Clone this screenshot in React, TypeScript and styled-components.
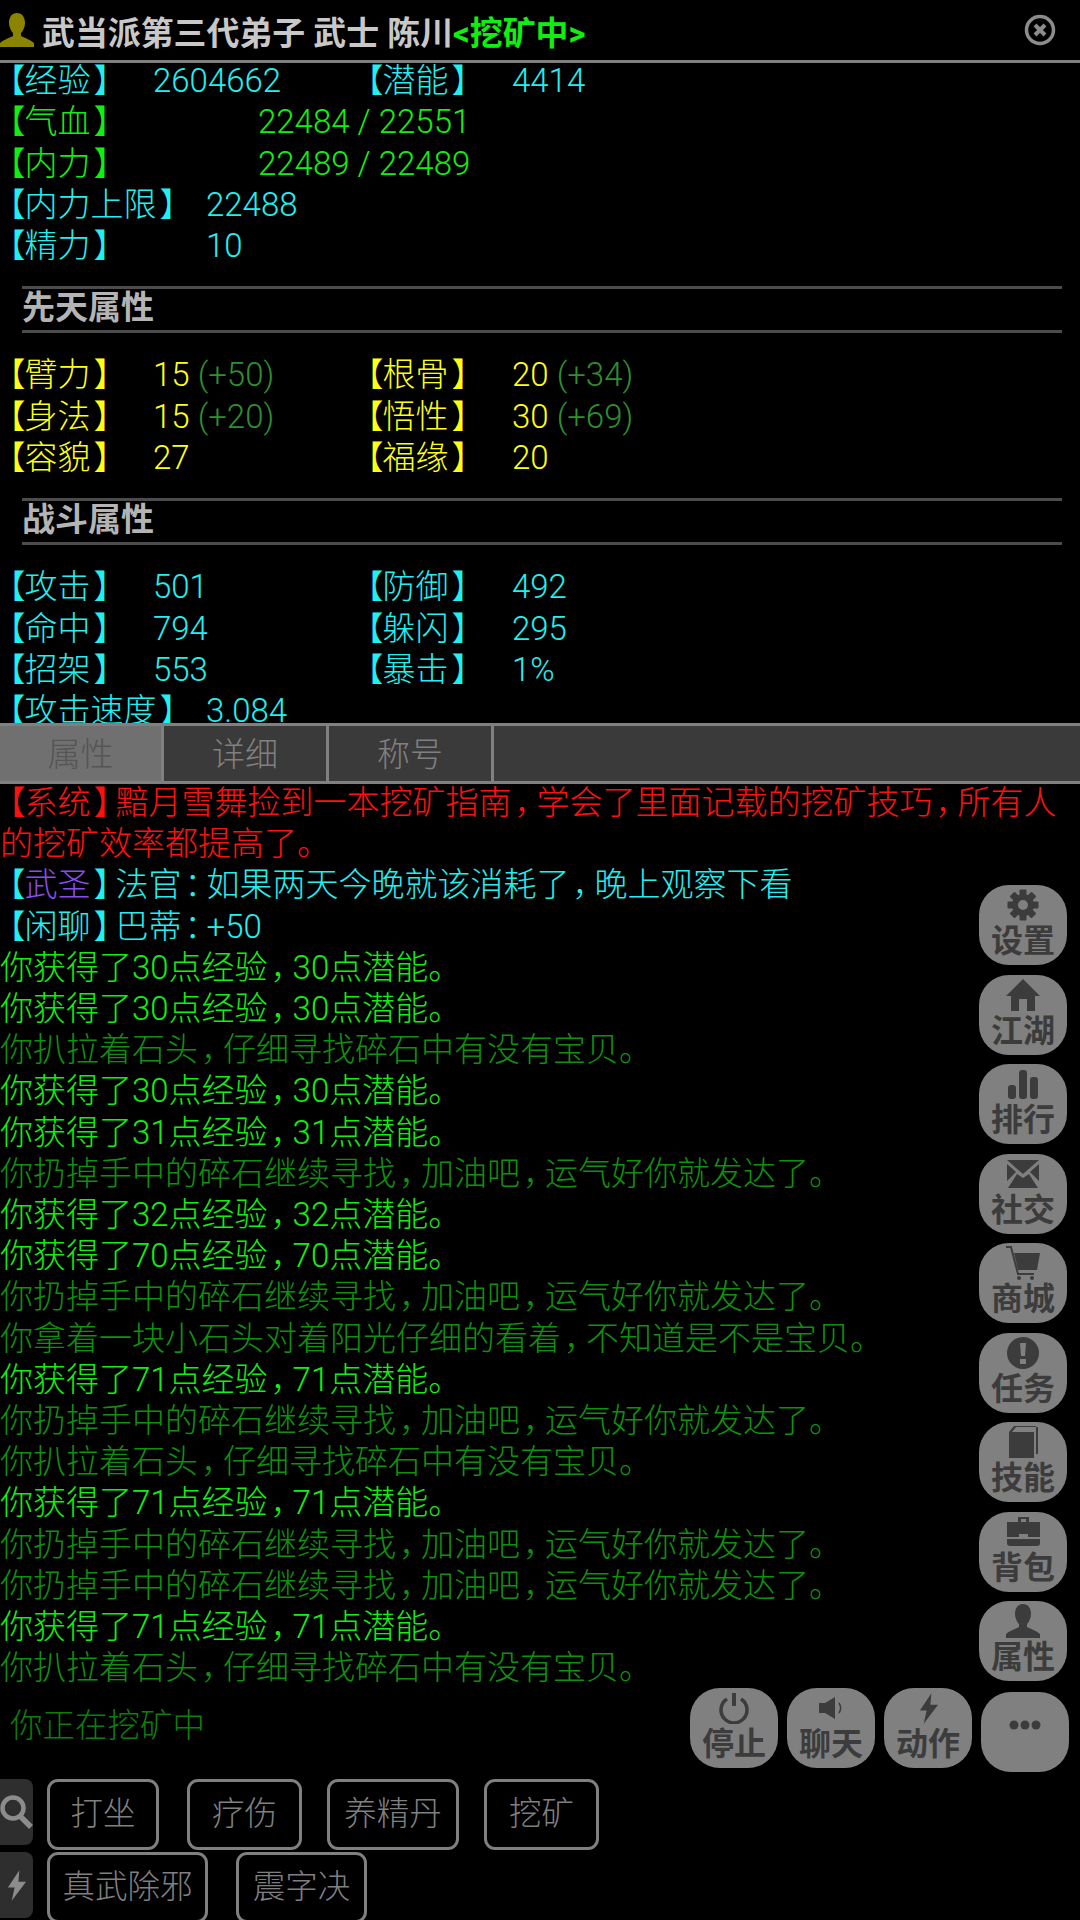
import React from 'react';
import styled, { createGlobalStyle } from 'styled-components';

const GlobalStyle = createGlobalStyle`
  html, body {
    margin: 0;
    padding: 0;
    background: #000;
  }
  body {
    font-family: Roboto, "Noto Sans CJK SC", sans-serif;
    font-size: 33px;
    font-weight: 300;
    line-height: 41.3px;
  }
`;

const CYAN = '#22f0f0';
const GREEN = '#10f010';
const DIM_GREEN = '#0e920e';
const YELLOW = '#ffff14';

// icons, drawn after the game's own icon font
const Gear = () => (
  <svg viewBox="0 0 32 32" width="32" height="32" fill="currentColor">
    {[0, 45, 90, 135, 180, 225, 270, 315].map((a) => (
      <rect key={a} x="12.5" y="0.5" width="7" height="8" rx="1" transform={`rotate(${a} 16 16)`} />
    ))}
    <path fillRule="evenodd" d="M16 5a11 11 0 1 0 0 22 11 11 0 0 0 0-22zm0 6a5 5 0 1 1 0 10 5 5 0 0 1 0-10z" />
  </svg>
);
const House = () => (
  <svg viewBox="0 0 34 32" width="34" height="32" fill="currentColor">
    <path d="M17 0 34 17h-5v15h-8V20h-8v12H5V17H0z" />
  </svg>
);
const Bars = () => (
  <svg viewBox="0 0 30 29" width="30" height="29" fill="currentColor">
    <rect x="0" y="15" width="8" height="14" rx="3" />
    <rect x="11" y="0" width="8" height="29" rx="3" />
    <rect x="22" y="7" width="8" height="22" rx="3" />
  </svg>
);
const Mail = () => (
  <svg viewBox="0 0 34 28" width="34" height="28" fill="currentColor">
    <path d="M1 0h32L17 14zM1 4l9 8-9 9zM33 4l-9 8 9 9zM11 14l6 4 6-4 9 14H2z" />
  </svg>
);
const Cart = () => (
  <svg viewBox="0 0 34 34" width="34" height="34" fill="currentColor">
    <path d="M8 7h26l-3 17H12z" />
    <path d="M0 1h5l7 27h16" fill="none" stroke="currentColor" strokeWidth="2" />
    <circle cx="13" cy="32" r="2" />
    <circle cx="26" cy="32" r="2" />
  </svg>
);
const Alert = () => (
  <svg viewBox="0 0 32 32" width="32" height="32" fill="currentColor">
    <path fillRule="evenodd" d="M16 0a16 16 0 1 0 0 32 16 16 0 0 0 0-32zM13 6h6l-1 13h-4zM13 22h6v5h-6z" />
  </svg>
);
const Book = () => (
  <svg viewBox="0 0 31 32" width="31" height="32" fill="currentColor">
    <path d="M1 6 6 0h22v1H8L4 6h22v26H1z" />
    <path d="M28 1h2v27h-2z" />
  </svg>
);
const Case = () => (
  <svg viewBox="0 0 33 29" width="33" height="29" fill="currentColor">
    <path fillRule="evenodd" d="M11 5V0h11v5h11v15H21v-3h-9v3H0V5zM14 2v3h5V2z" />
    <path d="M0 22h33v4a3 3 0 0 1-3 3H3a3 3 0 0 1-3-3z" />
  </svg>
);
const Person = ({ size = 34 }: { size?: number }) => (
  <svg viewBox="0 0 34 34" width={size} height={size} fill="currentColor">
    <path d="M17 0c5 0 8 4 8 10 0 4-2 8-4 10v3c4 2 10 4 13 7v4H0v-4c3-3 9-5 13-7v-3c-2-2-4-6-4-10 0-6 3-10 8-10z" />
  </svg>
);
const Power = () => (
  <svg viewBox="0 0 32 32" width="32" height="32" fill="none" stroke="currentColor" strokeWidth="3.5">
    <path d="M9 7a13 13 0 1 0 14 0" />
    <path d="M16 1v13" strokeWidth="4" />
  </svg>
);
const Speaker = () => (
  <svg viewBox="0 0 24 22" width="24" height="22" fill="currentColor">
    <path d="M0 6h6l10-6v22L6 16H0z" />
    <path d="M20 6c2 3 2 7 0 10" fill="none" stroke="currentColor" strokeWidth="1.5" />
  </svg>
);
const Bolt = ({ w = 21, h = 33 }: { w?: number; h?: number }) => (
  <svg viewBox="0 0 22 32" width={w} height={h} fill="currentColor">
    <path d="M14 0 2 18h7L6 32l15-20h-8z" />
  </svg>
);
const Dots = () => (
  <svg viewBox="0 0 32 10" width="32" height="10" fill="currentColor">
    <circle cx="5" cy="5" r="4.5" />
    <circle cx="16" cy="5" r="4.5" />
    <circle cx="27" cy="5" r="4.5" />
  </svg>
);
const Search = () => (
  <svg viewBox="0 0 33 34" width="33" height="34" fill="none" stroke="currentColor">
    <circle cx="13" cy="13" r="10.5" strokeWidth="4.5" />
    <path d="M20 21l11 11" strokeWidth="5.5" />
  </svg>
);
const CloseCircle = () => (
  <svg viewBox="0 0 32 32" width="32" height="32" fill="none" stroke="currentColor">
    <circle cx="16" cy="16" r="13.5" strokeWidth="3.5" />
    <path d="M11 11l10 10M21 11 11 21" strokeWidth="4" />
  </svg>
);

const Page = styled.div`
  position: relative;
  width: 1080px;
  height: 1920px;
  overflow: hidden;
  background: #000;
  display: flex;
  flex-direction: column;
`;

const Header = styled.header`
  flex: none;
  height: 60px;
  border-bottom: 3px solid #808080;
  display: flex;
  align-items: center;
  color: #c8c8c8;
  font-weight: 700;
`;

const AvatarSlot = styled.span`
  flex: none;
  width: 42px;
  display: flex;
  color: #8a8400;
`;

const Title = styled.div`
  flex: 1;
  white-space: nowrap;
  padding-top: 8px;
  font-size: 32.9px;
`;

const Mining = styled.span`
  color: #10f010;
`;

const CloseSlot = styled.span`
  flex: none;
  display: flex;
  margin-right: 24px;
  color: #8c8c8c;
`;

const Stats = styled.section`
  flex: none;
  height: 660px;
  overflow: hidden;
`;

const StatGroup = styled.div<{ $top?: number }>`
  margin-top: ${(p) => p.$top ?? 0}px;
`;

const Row = styled.div<{ $color: string }>`
  display: flex;
  height: 41.3px;
  color: ${(p) => p.$color};
  white-space: nowrap;
`;

const Label = styled.span<{ $w: number }>`
  flex: none;
  width: ${(p) => p.$w}px;
`;

const Bonus = styled.span`
  color: #2f8f2f;
`;

const SectionTitle = styled.div<{ $top: number }>`
  margin: ${(p) => p.$top}px 18px 0 22px;
  height: 41px;
  line-height: 38px;
  border-top: 3px solid #4c4c4c;
  border-bottom: 3px solid #4c4c4c;
  color: #b4b4b4;
  font-weight: 700;
`;

const Tabs = styled.nav`
  flex: none;
  display: flex;
  height: 61px;
  box-sizing: border-box;
  background: #3a3a3a;
  border-top: 3px solid #808080;
  border-bottom: 3px solid #808080;
`;

const Tab = styled.div<{ $active?: boolean; $w: number }>`
  width: ${(p) => p.$w}px;
  border-right: 3px solid #808080;
  box-sizing: border-box;
  padding-top: 3px;
  background: ${(p) => (p.$active ? '#707070' : '#3a3a3a')};
  color: ${(p) => (p.$active ? '#555' : '#808080')};
  display: flex;
  align-items: center;
  justify-content: center;
`;

const Log = styled.section`
  flex: none;
  margin-top: -2px;
  line-height: 41.2px;
`;

const Line = styled.div<{ $color: string }>`
  color: ${(p) => p.$color};
`;

const Tag = styled.span<{ $color: string }>`
  color: ${(p) => p.$color};
`;

// the device font sets this punctuation tighter than a full em
const OpenBracket = styled.span`
  font-feature-settings: "halt";
  margin-left: 9px;
  letter-spacing: -1px;
`;

const Punct = styled.span`
  margin-left: 3px;
  letter-spacing: -11px;
`;

const Rich = ({ text }: { text: string }) => (
  <>
    {text.split(/([【】，：])/).map((part, i) => {
      if (part === '【') return <OpenBracket key={i}>{part}</OpenBracket>;
      if (part === '】' || part === '，' || part === '：') return <Punct key={i}>{part}</Punct>;
      return part;
    })}
  </>
);

const SideButtons = styled.div`
  position: absolute;
  left: 979px;
  top: 885px;
  display: flex;
  flex-direction: column;
  gap: 9.5px;
`;

const ActionButtons = styled.div`
  position: absolute;
  left: 690px;
  top: 1688px;
  display: flex;
  gap: 9px;
`;

const RoundButton = styled.div`
  width: 88px;
  height: 80px;
  border-radius: 30px;
  background: #808080;
  color: #3c3c3c;
  font-size: 32px;
  font-weight: 700;
  line-height: 36px;
  display: flex;
  flex-direction: column;
  align-items: center;
  overflow: hidden;
`;

const IconSlot = styled.span`
  flex: none;
  height: 38px;
  padding-top: 2px;
  box-sizing: border-box;
  display: flex;
  align-items: center;
  justify-content: center;
`;

const MoreButton = styled(RoundButton)`
  margin-top: 4px;
  justify-content: center;
  padding-bottom: 14px;
  box-sizing: border-box;
`;

const Status = styled.div`
  flex: none;
  height: 91px;
  padding: 18px 0 0 10px;
  box-sizing: border-box;
  font-size: 32.5px;
  color: #0a800a;
`;

const Shortcuts = styled.div`
  flex: 1;
  display: flex;
  gap: 14px;
`;

const SideTabs = styled.div`
  flex: none;
  width: 33px;
  display: flex;
  flex-direction: column;
  gap: 7px;
`;

const SideTab = styled.div`
  height: 66px;
  flex: none;
  border-radius: 0 8px 8px 0;
  background: #2e2e2e;
  color: #8c8c8c;
  display: flex;
  align-items: center;
  justify-content: center;
`;

const ShortcutRows = styled.div`
  display: flex;
  flex-direction: column;
  gap: 2px;
`;

const ShortcutRow = styled.div`
  display: flex;
  gap: 25px;

  & > :first-child {
    margin-right: 3px;
  }
`;

const Shortcut = styled.div<{ $w: number }>`
  width: ${(p) => p.$w}px;
  height: 71px;
  box-sizing: border-box;
  border: 3px solid #808080;
  border-radius: 11px;
  font-size: 32.5px;
  color: #808080;
  display: flex;
  align-items: center;
  justify-content: center;
`;

const GAIN = '你扒拉着石头，仔细寻找碎石中有没有宝贝。';
const THROW = '你扔掉手中的碎石继续寻找，加油吧，运气好你就发达了。';
const SUN = '你拿着一块小石头对着阳光仔细的看着，不知道是不是宝贝。';
const xp = (n: number) => `你获得了${n}点经验，${n}点潜能。`;

const logLines: { text: string; dim: boolean }[] = [
  { text: xp(30), dim: false },
  { text: xp(30), dim: false },
  { text: GAIN, dim: true },
  { text: xp(30), dim: false },
  { text: xp(31), dim: false },
  { text: THROW, dim: true },
  { text: xp(32), dim: false },
  { text: xp(70), dim: false },
  { text: THROW, dim: true },
  { text: SUN, dim: true },
  { text: xp(71), dim: false },
  { text: THROW, dim: true },
  { text: GAIN, dim: true },
  { text: xp(71), dim: false },
  { text: THROW, dim: true },
  { text: THROW, dim: true },
  { text: xp(71), dim: false },
  { text: GAIN, dim: true },
];

const sideButtons = [
  { label: '设置', icon: <Gear /> },
  { label: '江湖', icon: <House /> },
  { label: '排行', icon: <Bars /> },
  { label: '社交', icon: <Mail /> },
  { label: '商城', icon: <Cart /> },
  { label: '任务', icon: <Alert /> },
  { label: '技能', icon: <Book /> },
  { label: '背包', icon: <Case /> },
  { label: '属性', icon: <Person /> },
];

const actionButtons = [
  { label: '停止', icon: <Power /> },
  { label: '聊天', icon: <Speaker /> },
  { label: '动作', icon: <Bolt /> },
];

type Stat = { label: string; value: string; bonus?: string };

const StatRow = ({ color, left, right }: { color: string; left: Stat; right?: Stat }) => (
  <Row $color={color}>
    <Label $w={153}>
      <Rich text={left.label} />
    </Label>
    <Label $w={205}>
      {left.value}
      {left.bonus && <Bonus> {left.bonus}</Bonus>}
    </Label>
    {right && (
      <>
        <Label $w={154}>
          <Rich text={right.label} />
        </Label>
        <span>
          {right.value}
          {right.bonus && <Bonus> {right.bonus}</Bonus>}
        </span>
      </>
    )}
  </Row>
);

const WideRow = ({ color, width, label, value }: { color: string; width: number; label: string; value: string }) => (
  <Row $color={color}>
    <Label $w={width}>
      <Rich text={label} />
    </Label>
    <span>{value}</span>
  </Row>
);

export default function App() {
  return (
    <Page>
      <GlobalStyle />
      <Header>
        <AvatarSlot>
          <Person size={34} />
        </AvatarSlot>
        <Title>
          武当派第三代弟子 武士 陈川<Mining>&lt;挖矿中&gt;</Mining>
        </Title>
        <CloseSlot>
          <CloseCircle />
        </CloseSlot>
      </Header>

      <Stats>
        <StatGroup $top={-3}>
          <StatRow color={CYAN} left={{ label: '【经验】', value: '2604662' }} right={{ label: '【潜能】', value: '4414' }} />
          <WideRow color={GREEN} width={258} label="【气血】" value="22484 / 22551" />
          <WideRow color={GREEN} width={258} label="【内力】" value="22489 / 22489" />
          <WideRow color={CYAN} width={206} label="【内力上限】" value="22488" />
          <WideRow color={CYAN} width={206} label="【精力】" value="10" />
        </StatGroup>

        <SectionTitle $top={20}>先天属性</SectionTitle>
        <StatGroup $top={21}>
          <StatRow color={YELLOW} left={{ label: '【臂力】', value: '15', bonus: '(+50)' }} right={{ label: '【根骨】', value: '20', bonus: '(+34)' }} />
          <StatRow color={YELLOW} left={{ label: '【身法】', value: '15', bonus: '(+20)' }} right={{ label: '【悟性】', value: '30', bonus: '(+69)' }} />
          <StatRow color={YELLOW} left={{ label: '【容貌】', value: '27' }} right={{ label: '【福缘】', value: '20' }} />
        </StatGroup>

        <SectionTitle $top={20}>战斗属性</SectionTitle>
        <StatGroup $top={21}>
          <StatRow color={CYAN} left={{ label: '【攻击】', value: '501' }} right={{ label: '【防御】', value: '492' }} />
          <StatRow color={CYAN} left={{ label: '【命中】', value: '794' }} right={{ label: '【躲闪】', value: '295' }} />
          <StatRow color={CYAN} left={{ label: '【招架】', value: '553' }} right={{ label: '【暴击】', value: '1%' }} />
          <WideRow color={CYAN} width={206} label="【攻击速度】" value="3.084" />
        </StatGroup>
      </Stats>

      <Tabs>
        <Tab $active $w={164}>属性</Tab>
        <Tab $w={165}>详细</Tab>
        <Tab $w={165}>称号</Tab>
      </Tabs>

      <Log>
        <Line $color="#ff1010">
          <Rich text="【系统】黯月雪舞捡到一本挖矿指南，学会了里面记载的挖矿技巧，所有人的挖矿效率都提高了。" />
        </Line>
        <Line $color={CYAN}>
          <OpenBracket>【</OpenBracket>
          <Tag $color="#8a4cf0">武圣</Tag>
          <Punct>】</Punct>
          <Rich text="法官：如果两天今晚就该消耗了，晚上观察下看" />
        </Line>
        <Line $color={CYAN}>
          <Rich text="【闲聊】巴蒂：+50" />
        </Line>
        {logLines.map((line, i) => (
          <Line key={i} $color={line.dim ? DIM_GREEN : GREEN}>
            <Rich text={line.text} />
          </Line>
        ))}
      </Log>

      <Status>你正在挖矿中</Status>

      <Shortcuts>
        <SideTabs>
          <SideTab>
            <Search />
          </SideTab>
          <SideTab>
            <Bolt w={21} h={33} />
          </SideTab>
        </SideTabs>
        <ShortcutRows>
          <ShortcutRow>
            <Shortcut $w={112}>打坐</Shortcut>
            <Shortcut $w={115}>疗伤</Shortcut>
            <Shortcut $w={132}>养精丹</Shortcut>
            <Shortcut $w={115}>挖矿</Shortcut>
          </ShortcutRow>
          <ShortcutRow>
            <Shortcut $w={161}>真武除邪</Shortcut>
            <Shortcut $w={131}>震字决</Shortcut>
          </ShortcutRow>
        </ShortcutRows>
      </Shortcuts>

      <SideButtons>
        {sideButtons.map((b) => (
          <RoundButton key={b.label}>
            <IconSlot>{b.icon}</IconSlot>
            {b.label}
          </RoundButton>
        ))}
      </SideButtons>

      <ActionButtons>
        {actionButtons.map((b) => (
          <RoundButton key={b.label}>
            <IconSlot>{b.icon}</IconSlot>
            {b.label}
          </RoundButton>
        ))}
        <MoreButton>
          <Dots />
        </MoreButton>
      </ActionButtons>
    </Page>
  );
}
